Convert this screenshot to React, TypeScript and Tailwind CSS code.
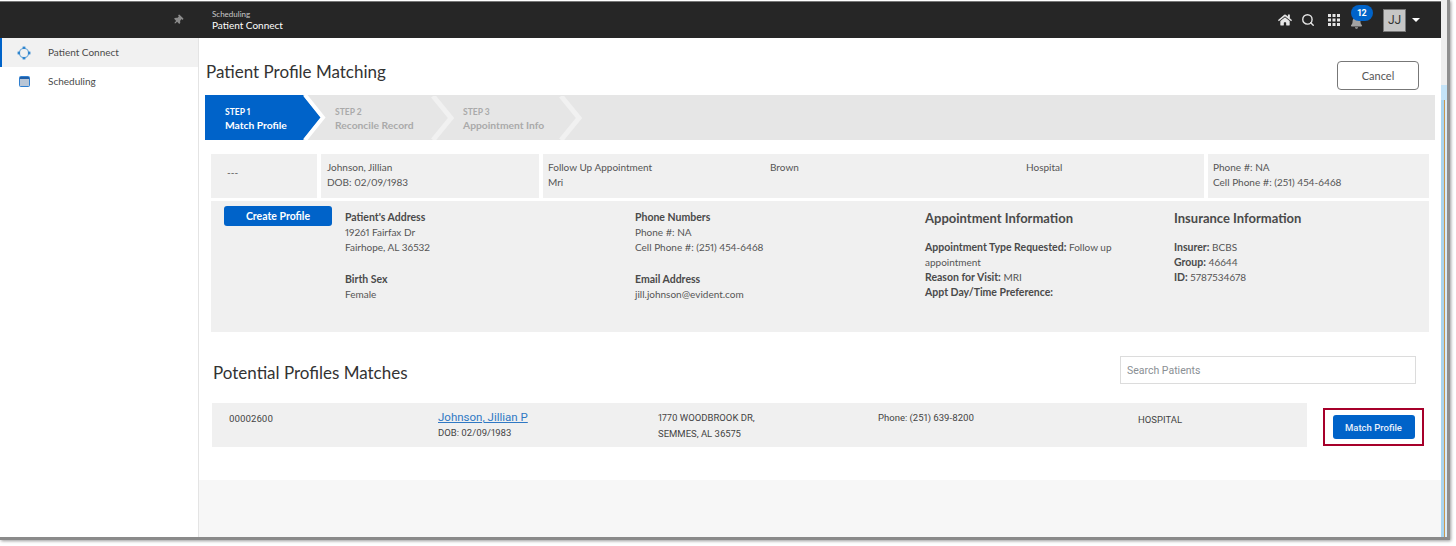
import React from 'react';
import { FaHome, FaBell, FaThumbtack } from 'react-icons/fa';
import { Search } from 'lucide-react';

const Chevron = ({ className }: { className: string }) => (
  <svg width="24" height="44" viewBox="0 0 24 44" className={className}>
    <path d="M2 0 L20 22 L2 44" fill="none" stroke="#f1f1f1" strokeWidth="5" />
  </svg>
);

const ConnectIcon = () => (
  <svg width="14" height="14" viewBox="0 0 14 14">
    <circle cx="7" cy="7" r="4.6" fill="none" stroke="#7fb2dc" strokeWidth="1.4" />
    <rect x="5.6" y="0.6" width="2.8" height="2.4" fill="#2f86cf" />
    <rect x="5.6" y="11" width="2.8" height="2.4" fill="#2f86cf" />
    <rect x="0.6" y="5.6" width="2.4" height="2.8" fill="#2f86cf" />
    <rect x="11" y="5.6" width="2.4" height="2.8" fill="#2f86cf" />
  </svg>
);

const CalendarIcon = () => (
  <svg width="11" height="11" viewBox="0 0 11 11">
    <rect x="0.5" y="0.5" width="10" height="10" rx="1" fill="#b9c6d6" stroke="#2f7fd0" />
    <rect x="1" y="1" width="9" height="2" fill="#1f5fa8" />
  </svg>
);

const GridDots = () => (
  <svg width="12" height="12" viewBox="0 0 12 12" fill="#e4e4e4">
    {[0, 4.5, 9].map((y) =>
      [0, 4.5, 9].map((x) => <rect key={`${x}-${y}`} x={x} y={y} width="3" height="3" />),
    )}
  </svg>
);

const Label = ({ children }: { children: React.ReactNode }) => (
  <div className="font-bold text-[10.5px] text-[#4a4a4a]">{children}</div>
);

const Strong = ({ children }: { children: React.ReactNode }) => (
  <span className="font-bold text-[10.5px] text-[#4a4a4a]">{children}</span>
);

export default function App() {
  return (
    <div className="w-[1456px] h-[546px] bg-white overflow-hidden font-['Lato','Noto_Sans',sans-serif] proportional-nums text-[10px] leading-[15px] text-[#555]">
      <div className="w-[1450px] h-[540px] flex border-r-[3px] border-r-[#8f8f8f] border-b-[3px] border-b-[#8a8a8a] shadow-[1px_1px_3px_rgba(0,0,0,0.4)]">
        <div className="w-[1441px] shrink-0 flex flex-col pt-px">
          {/* header */}
          <div className="h-[37px] shrink-0 bg-[#262626] border-t border-t-[#777] flex items-center pl-[173px] pr-[21px] text-white">
            <FaThumbtack className="w-[10px] h-[10px] text-[#8a8a8a] rotate-45" />
            <div className="ml-[29px] flex flex-col pt-px">
              <span className="text-[8px] leading-[9px] text-[#c9c9c9]">Scheduling</span>
              <span className="text-[10px] leading-[12px]">Patient Connect</span>
            </div>
            <div className="ml-auto flex items-center">
              <FaHome className="w-[14px] h-[14px] text-[#e6e6e6]" />
              <Search className="ml-[9px] w-[14px] h-[14px] text-[#e6e6e6]" strokeWidth={2.4} />
              <div className="ml-[13px]">
                <GridDots />
              </div>
              <div className="relative ml-[11px] w-[14px] h-[14px]">
                <FaBell className="w-[11px] h-[13px] text-[#a3a3a3] mt-[3px]" />
                <span className="absolute -top-[8px] left-0 w-[22px] h-[16px] rounded-full bg-[#0063c9] text-white text-[9px] leading-[16px] font-bold text-center font-['Roboto',sans-serif]">
                  12
                </span>
              </div>
              <div className="ml-[18px] w-[23px] h-[23px] bg-[#c6c6c6] border border-[#777] text-[#333] text-[12px] leading-[21px] text-center font-['Roboto',sans-serif]">
                JJ
              </div>
              <span className="ml-[6px] w-0 h-0 border-x-[4px] border-x-transparent border-t-[4px] border-t-white" />
            </div>
          </div>

          <div className="flex-1 flex min-h-0">
            {/* sidebar */}
            <div className="w-[199px] shrink-0 border-r border-r-[#e4e4e4] text-[#4a4a4a]">
              <div className="h-[29px] bg-[#f1f1f1] border-l-2 border-l-[#0063c9] flex items-center pl-[15px]">
                <ConnectIcon />
                <span className="ml-[17px]">Patient Connect</span>
              </div>
              <div className="h-[29px] flex items-center pl-[19px]">
                <CalendarIcon />
                <span className="ml-[18px]">Scheduling</span>
              </div>
            </div>

            {/* main */}
            <div className="flex-1 flex flex-col min-w-0">
              <div className="flex-1 pl-[6px]">
                <div className="flex items-start pt-[23px] pr-[22px] h-[57px]">
                  <h1 className="ml-px text-[17px] leading-[22px] text-[#333]">Patient Profile Matching</h1>
                  <button className="ml-auto w-[82px] h-[29px] rounded border border-[#777] bg-white text-[#555] text-[11px]">
                    Cancel
                  </button>
                </div>

                {/* stepper */}
                <div className="w-[1230px] h-[45px] bg-[#e6e6e6] flex text-[10.3px] leading-[12px] font-bold text-[#aaa]">
                  <div className="w-[98px] bg-[#0063c9] pl-[20px] pt-[11px] text-white">
                    <div className="text-[8.5px]">STEP 1</div>
                    <div className="mt-px">Match Profile</div>
                  </div>
                  <svg width="27" height="45" viewBox="0 0 27 45" className="shrink-0">
                    <path d="M0 0 L18 22.5 L0 45 Z" fill="#0063c9" />
                    <path d="M2 0 L20 22.5 L2 45" fill="none" stroke="#fff" strokeWidth="4" />
                  </svg>
                  <div className="w-[101px] pl-[5px] pt-[11px]">
                    <div className="text-[8.5px]">STEP 2</div>
                    <div className="mt-px whitespace-nowrap">Reconcile Record</div>
                  </div>
                  <Chevron className="shrink-0 mt-px" />
                  <div className="w-[104px] pl-[8px] pt-[11px]">
                    <div className="text-[8.5px]">STEP 3</div>
                    <div className="mt-px whitespace-nowrap">Appointment Info</div>
                  </div>
                  <Chevron className="shrink-0 mt-px" />
                </div>

                {/* summary row */}
                <div className="ml-[6px] mt-[14px] w-[1218px] h-[44px] flex gap-[4px]">
                  <div className="w-[106px] bg-[#f0f0f0] pl-[16px] pt-[11px]">---</div>
                  <div className="w-[218px] bg-[#f0f0f0] pl-[6px] pt-[6px]">
                    <div>Johnson, Jillian</div>
                    <div>DOB: 02/09/1983</div>
                  </div>
                  <div className="w-[661px] bg-[#f0f0f0] pl-[5px] pt-[6px] flex">
                    <div className="w-[222px]">
                      <div>Follow Up Appointment</div>
                      <div>Mri</div>
                    </div>
                    <div className="w-[256px]">Brown</div>
                    <div>Hospital</div>
                  </div>
                  <div className="w-[221px] bg-[#f0f0f0] pl-[5px] pt-[6px]">
                    <div>Phone #: NA</div>
                    <div>Cell Phone #: (251) 454-6468</div>
                  </div>
                </div>

                {/* details */}
                <div className="ml-[6px] mt-[3px] w-[1218px] h-[131px] bg-[#f0f0f0] flex pl-[13px] pt-[5px]">
                  <button className="w-[108px] h-[20px] rounded-[3px] bg-[#0063c9] text-white text-[10.5px] font-bold">
                    Create Profile
                  </button>
                  <div className="ml-[13px] w-[290px] pt-[4px]">
                    <Label>Patient's Address</Label>
                    <div>19261 Fairfax Dr</div>
                    <div>Fairhope, AL 36532</div>
                    <div className="mt-[17px]">
                      <Label>Birth Sex</Label>
                      <div>Female</div>
                    </div>
                  </div>
                  <div className="w-[290px] pt-[4px]">
                    <Label>Phone Numbers</Label>
                    <div>Phone #: NA</div>
                    <div>Cell Phone #: (251) 454-6468</div>
                    <div className="mt-[17px]">
                      <Label>Email Address</Label>
                      <div>jill.johnson@evident.com</div>
                    </div>
                  </div>
                  <div className="w-[249px] pt-[4px]">
                    <div className="text-[13px] leading-[17px] font-bold text-[#4a4a4a]">Appointment Information</div>
                    <div className="mt-[13px]">
                      <Strong>Appointment Type Requested:</Strong> Follow up
                    </div>
                    <div>appointment</div>
                    <div>
                      <Strong>Reason for Visit:</Strong> MRI
                    </div>
                    <Label>Appt Day/Time Preference:</Label>
                  </div>
                  <div className="pt-[4px]">
                    <div className="text-[13px] leading-[17px] font-bold text-[#4a4a4a]">Insurance Information</div>
                    <div className="mt-[13px]">
                      <Strong>Insurer:</Strong> BCBS
                    </div>
                    <div>
                      <Strong>Group:</Strong> 46644
                    </div>
                    <div>
                      <Strong>ID:</Strong> 5787534678
                    </div>
                  </div>
                </div>

                {/* matches */}
                <div className="ml-[8px] mt-[24px] w-[1203px] flex items-center justify-between">
                  <h2 className="mt-[6px] text-[17px] leading-[22px] text-[#333]">Potential Profiles Matches</h2>
                  <input
                    placeholder="Search Patients"
                    className="w-[296px] h-[28px] border border-[#dcdcdc] bg-white pl-[6px] text-[10.5px] font-['Roboto',sans-serif] placeholder:text-[#8a8f94]"
                  />
                </div>
                <div className="ml-[7px] mt-[19px] flex font-['Roboto',sans-serif] text-[9.5px] text-[#444]">
                  <div className="w-[1095px] h-[44px] bg-[#f0f0f0] flex pt-[7px]">
                    <div className="w-[226px] pl-[17px] pt-px">00002600</div>
                    <div className="w-[220px] pt-px">
                      <a className="block text-[11.5px] leading-[13px] text-[#2f78c4] underline">Johnson, Jillian P</a>
                      <div className="mt-px">DOB: 02/09/1983</div>
                    </div>
                    <div className="w-[220px]">
                      <div className="leading-[16px]">1770 WOODBROOK DR,</div>
                      <div className="leading-[16px]">SEMMES, AL 36575</div>
                    </div>
                    <div className="w-[260px]">Phone: (251) 639-8200</div>
                    <div className="pt-[2px]">HOSPITAL</div>
                  </div>
                  <div className="ml-[16px] mt-[5px] w-[101px] h-[38px] border-2 border-[#a6002a] flex items-center justify-center">
                    <button className="w-[82px] h-[24px] rounded-[3px] bg-[#0063c9] text-[#e8f0fa] text-[9.5px] font-medium">
                      Match Profile
                    </button>
                  </div>
                </div>
              </div>
              <div className="h-[57px] shrink-0 bg-[#f7f7f7]" />
            </div>
          </div>
        </div>
        {/* sliver of the window behind */}
        <div className="flex-1 flex flex-col">
          <div className="h-[85px] bg-[#eeeeee]" />
          <div className="h-[15px] bg-[#c4e3f7]" />
          <div className="flex-1 flex">
            <div className="w-[3px] bg-[#a9d5f0]" />
            <div className="w-px bg-[#c9974f]" />
            <div className="flex-1 bg-[#d9ecf8]" />
          </div>
        </div>
      </div>
    </div>
  );
}
